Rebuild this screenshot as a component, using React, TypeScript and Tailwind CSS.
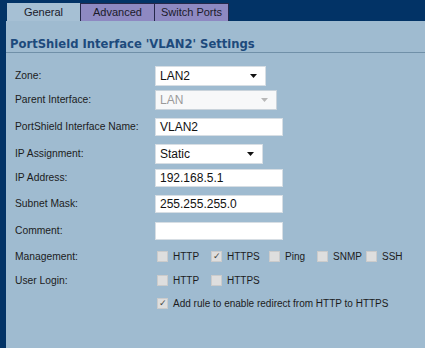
import React from 'react';

const Select: React.FC<{ value: string; width: string; disabled?: boolean }> = ({ value, width, disabled }) => (
    <div className={`${width} h-[20px] flex items-center justify-between pl-[4px] pr-[8px] border ${disabled ? 'bg-[#f7f8f9] border-[#c9d3db] text-[#9a9a9a]' : 'bg-white border-[#d7dee4] text-[#111]'}`}>
        <span className="text-[12px] leading-none">{value}</span>
        <svg width="7" height="4" viewBox="0 0 7 4">
            <path d="M0 0 L7 0 L3.5 4 Z" fill={disabled ? '#b8b8b8' : '#111'} />
        </svg>
    </div>
);

const TextBox: React.FC<{ value?: string }> = ({ value }) => (
    <div className="w-[128px] h-[18px] flex items-center pl-[4px] bg-white border border-[#d7dee4] text-[12px] leading-none text-[#111]">
        {value}
    </div>
);

const Check: React.FC<{ label: string; checked?: boolean; className?: string }> = ({ label, checked, className }) => (
    <div className={`flex items-center ${className ?? ''}`}>
        <div className="w-[11px] h-[11px] bg-[#dedede] border border-[#cbcbcb] flex items-center justify-center text-[9px] leading-none text-[#444]">
            {checked ? '✓' : ''}
        </div>
        <span className="ml-[5px]">{label}</span>
    </div>
);

const Row: React.FC<{ label: string; mt: string; children: React.ReactNode }> = ({ label, mt, children }) => (
    <div className={`flex items-center h-[20px] ${mt}`}>
        <div className="w-[149px] pl-[9px] text-[#1c1c1c]">{label}</div>
        <div className="flex items-center">{children}</div>
    </div>
);

export default function App() {
    return (
        <div className="w-[425px] h-[348px] bg-[#023366] flex pl-[6px] overflow-hidden" style={{ fontFamily: '"Liberation Sans", Arial, sans-serif' }}>
            <div className="flex-1 flex flex-col">

                {/* Tabs */}
                <div className="h-[21px] flex items-end pl-[1px] text-[11px] text-[#1a1a2a]">
                    <div className="w-[73px] h-[18px] bg-[#a6c0d4] flex items-center justify-center">General</div>
                    <div className="w-[75px] h-[18px] bg-[#8e89c2] border border-b-0 border-[#25284a] flex items-center justify-center">Advanced</div>
                    <div className="w-[74px] h-[18px] bg-[#8e89c2] border border-b-0 border-l-0 border-[#25284a] flex items-center justify-center">Switch Ports</div>
                </div>

                {/* Panel */}
                <div className="flex-1 bg-[#9fbbd0] flex flex-col text-[10.3px]">
                    <div className="pl-[4px] pt-[18px] pb-[1px] border-b border-[#7090a8]">
                        <h2 className="text-[11.6px] font-bold text-[#1d4a7c] leading-none" style={{ fontFamily: '"DejaVu Sans", Verdana, sans-serif' }}>
                            PortShield Interface 'VLAN2' Settings
                        </h2>
                    </div>

                    <Row label="Zone:" mt="mt-[13px]"><Select value="LAN2" width="w-[111px]" /></Row>
                    <Row label="Parent Interface:" mt="mt-[4px]"><Select value="LAN" width="w-[122px]" disabled /></Row>
                    <Row label="PortShield Interface Name:" mt="mt-[7px]"><TextBox value="VLAN2" /></Row>
                    <Row label="IP Assignment:" mt="mt-[7px]"><Select value="Static" width="w-[108px]" /></Row>
                    <Row label="IP Address:" mt="mt-[4px]"><TextBox value="192.168.5.1" /></Row>
                    <Row label="Subnet Mask:" mt="mt-[6px]"><TextBox value="255.255.255.0" /></Row>
                    <Row label="Comment:" mt="mt-[7px]"><TextBox /></Row>

                    <Row label="Management:" mt="mt-[6px]">
                        <div className="flex items-center pl-[2px] text-[10px] text-[#1c1c1c]">
                            <Check label="HTTP" className="w-[54px]" />
                            <Check label="HTTPS" checked className="w-[58px]" />
                            <Check label="Ping" className="w-[48px]" />
                            <Check label="SNMP" className="w-[49px]" />
                            <Check label="SSH" />
                        </div>
                    </Row>
                    <Row label="User Login:" mt="mt-[4px]">
                        <div className="flex items-center pl-[2px] text-[10px] text-[#1c1c1c]">
                            <Check label="HTTP" className="w-[54px]" />
                            <Check label="HTTPS" />
                        </div>
                    </Row>
                    <Row label="" mt="mt-[3px]">
                        <div className="flex items-center pl-[2px] text-[10px] text-[#1c1c1c]">
                            <Check label="Add rule to enable redirect from HTTP to HTTPS" checked />
                        </div>
                    </Row>
                </div>
            </div>
        </div>
    );
}
